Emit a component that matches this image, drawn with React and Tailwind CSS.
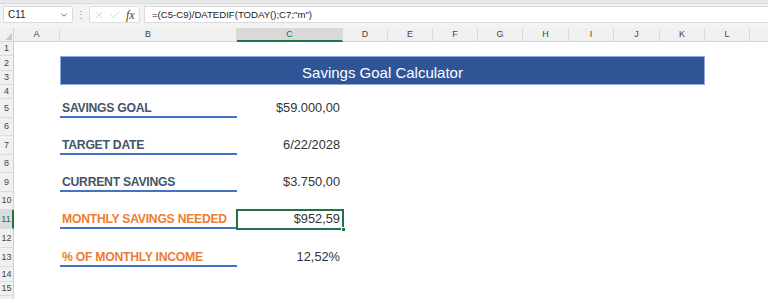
import { ChevronDown, X, Check } from 'lucide-react';

const columns = [
  { key: 'A' }, { key: 'B' }, { key: 'C', active: true }, { key: 'D' }, { key: 'E' },
  { key: 'F' }, { key: 'G' }, { key: 'H' }, { key: 'I' }, { key: 'J' },
  { key: 'K' }, { key: 'L' }, { key: '' }
];

const rowNumbers = Array.from({ length: 16 }, (_, i) => i + 1);

const entries = [
  { row: 5, label: 'SAVINGS GOAL', value: '$59.000,00' },
  { row: 7, label: 'TARGET DATE', value: '6/22/2028' },
  { row: 9, label: 'CURRENT SAVINGS', value: '$3.750,00' },
  { row: 11, label: 'MONTHLY SAVINGS NEEDED', value: '$952,59', accent: true, selected: true },
  { row: 13, label: '% OF MONTHLY INCOME', value: '12,52%', accent: true }
];

// grid rows: 1 = column header, sheet row n = grid row n + 1
const rowStart = {
  2: 'row-start-2', 3: 'row-start-3', 4: 'row-start-4', 5: 'row-start-5', 6: 'row-start-6',
  7: 'row-start-7', 8: 'row-start-8', 9: 'row-start-9', 10: 'row-start-10', 11: 'row-start-11',
  12: 'row-start-12', 13: 'row-start-13', 14: 'row-start-14', 15: 'row-start-15',
  16: 'row-start-16', 17: 'row-start-17'
};

function FormulaBar() {
  return (
    <div className="h-[28px] bg-[#f3f3f3] flex flex-col">
      <div className="h-[4px] bg-[#e8e8e8] border-b border-[#dcdcdc]" />
      <div className="flex items-start pt-[2px] pl-[3px]">
        {/* Name box */}
        <div className="w-[70px] h-[17px] bg-white border border-[#dadada] rounded-[2px] flex items-center justify-between pl-[4px] pr-[3px]">
          <span className="text-[10px] text-[#222] leading-none">C11</span>
          <ChevronDown className="w-[10px] h-[10px] text-[#555]" strokeWidth={2} />
        </div>
        <div className="w-[16px] h-[17px] flex items-center justify-center text-[#888] text-[10px] leading-none">⋮</div>
        {/* Cancel / enter / fx */}
        <div className="w-[51px] h-[17px] bg-white border border-[#e0e0e0] rounded-[2px] flex items-center gap-[4px] pl-[3px]">
          <X className="w-[12px] h-[12px] text-[#c4c4c4]" strokeWidth={1.3} />
          <Check className="w-[12px] h-[12px] text-[#c4c4c4]" strokeWidth={1.3} />
          <span className="font-['Liberation_Serif',serif] italic text-[12px] text-[#444] leading-none ml-[1px]">fx</span>
        </div>
        {/* Formula input */}
        <div className="flex-1 ml-[4px] h-[17px] bg-white border border-r-0 border-[#dadada] flex items-center pl-[7px]">
          <span className="text-[9.6px] text-[#222] leading-none">=(C5-C9)/DATEDIF(TODAY();C7;"m")</span>
        </div>
      </div>
    </div>
  );
}

function Sheet() {
  return (
    <div className="grid grid-cols-[14px_46px_177px_106px_45px_45px_45px_45px_46px_45px_46px_45px_45px_48px] grid-rows-[14px_14px_15px_14px_14px_19px_18px_19px_18px_19px_18px_19px_19px_19px_15px_14px_14px] bg-white">
      {/* Corner */}
      <div className="row-start-1 col-start-1 bg-[#f0f0f0] border-b border-r border-[#d4d4d4] flex items-end justify-end p-[1px]">
        <svg width="7" height="7" viewBox="0 0 7 7">
          <polygon points="7,0 7,7 0,7" fill="#c9c9c9" />
        </svg>
      </div>

      {/* Column headers */}
      {columns.map((col, i) => (
        <div
          key={i}
          className={`row-start-1 flex items-center justify-center text-[9px] leading-none border-r border-[#dadada] ${
            col.active
              ? 'bg-[#d9d9d9] text-[#216f43] border-b-2 border-b-[#217346]'
              : 'bg-[#f0f0f0] text-[#444] border-b border-b-[#d4d4d4]'
          }`}
        >
          {col.key}
        </div>
      ))}

      {/* Row headers */}
      {rowNumbers.map((n) => (
        <div
          key={n}
          className={`col-start-1 ${rowStart[n + 1]} flex items-center justify-center text-[9px] leading-none border-b border-[#dcdcdc] ${
            n === 11
              ? 'bg-[#dcdcdc] text-[#217346] border-r-2 border-r-[#217346]'
              : 'bg-[#f0f0f0] text-[#444] border-r border-r-[#cfcfcf]'
          }`}
        >
          {n < 16 ? n : ''}
        </div>
      ))}

      {/* Title banner (B2:K3) */}
      <div className="row-start-3 row-end-5 col-start-3 col-end-13 bg-[#2f5597] border border-[#8faadc] flex items-center justify-center">
        <span className="text-white text-[15px] leading-none pt-[3px]">Savings Goal Calculator</span>
      </div>

      {/* Label / value rows */}
      {entries.map((e) => (
        <div key={e.row} className="contents">
          <div
            className={`col-start-3 ${rowStart[e.row + 1]} border-b-2 border-[#4472c4] flex items-end pl-[2px] pb-[2px]`}
          >
            <span
              className={`whitespace-nowrap font-bold text-[12.2px] tracking-[-0.25px] leading-none ${
                e.accent ? 'text-[#ed7d31]' : 'text-[#44546a]'
              }`}
            >
              {e.label}
            </span>
          </div>
          <div className={`col-start-4 ${rowStart[e.row + 1]} relative flex items-end justify-end pr-[3px] pb-[3px]`}>
            <span className="whitespace-nowrap text-[12.8px] leading-none text-[#333]">{e.value}</span>
            {e.selected && (
              <>
                <div className="absolute -top-[1px] -left-[1px] -right-[1px] -bottom-[1px] border-2 border-[#217346]" />
                <div className="absolute -right-[3px] -bottom-[3px] w-[5px] h-[5px] bg-[#217346] border border-white" />
              </>
            )}
          </div>
        </div>
      ))}
    </div>
  );
}

export default function App() {
  return (
    <div className="w-[768px] h-[299px] overflow-hidden bg-white font-['Liberation_Sans',sans-serif]">
      <FormulaBar />
      <Sheet />
    </div>
  );
}
